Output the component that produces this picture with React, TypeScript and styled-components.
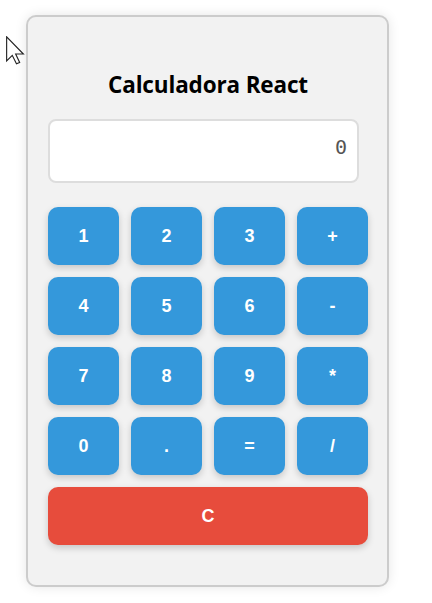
import React, { useState } from "react";
import styled, { createGlobalStyle } from "styled-components";

const Global = createGlobalStyle`
  html, body { margin: 0; padding: 0; background: #ffffff; }
  body { font-family: "Liberation Sans", Arial, sans-serif; }
  * { box-sizing: border-box; }
`;

const Page = styled.div`
  position: relative;
  display: flex;
  align-items: flex-start;
  padding: 15px 0 0 26px;
  min-height: 603px;
`;

const Card = styled.div`
  width: 363px;
  height: 572px;
  display: flex;
  flex-direction: column;
  padding: 20px 19px 40px 20px;
  background: #f2f2f2;
  border: 2px solid #cccccc;
  border-radius: 10px;
  box-shadow: 0 0 12px rgba(0, 0, 0, 0.1);
`;

const Title = styled.h2`
  margin: 33px 0 19px;
  height: 30px;
  line-height: 30px;
  text-align: center;
  font-family: "Open Sans", "Noto Sans", sans-serif;
  font-weight: 700;
  font-size: 22.5px;
  letter-spacing: -0.15px;
  color: #000000;
`;

const Display = styled.div`
  width: 311px;
  height: 64px;
  display: flex;
  align-items: flex-start;
  justify-content: flex-end;
  padding: 14px 10px 0;
  background: #ffffff;
  border: 2px solid #dddddd;
  border-radius: 8px;
  font-family: "DejaVu Sans Mono", "Liberation Mono", monospace;
  font-size: 20px;
  color: #555555;
`;

const Keys = styled.div`
  margin-top: 24px;
  width: 320px;
  display: grid;
  grid-template-columns: repeat(4, 71px);
  grid-auto-rows: 58px;
  column-gap: 12px;
  row-gap: 12px;
`;

const Key = styled.button<{ $danger?: boolean }>`
  grid-column: ${(p) => (p.$danger ? "1 / -1" : "auto")};
  border: none;
  border-radius: 10px;
  background: ${(p) => (p.$danger ? "#e74c3c" : "#3498db")};
  color: #ffffff;
  font-family: "Liberation Sans", Arial, sans-serif;
  font-weight: 700;
  font-size: 18px;
  box-shadow: 0 3px 7px rgba(0, 0, 0, 0.18);
  cursor: pointer;
  padding: 0;
`;

const Cursor = styled.svg`
  position: absolute;
  left: 5px;
  top: 36px;
`;

const keys = ["1", "2", "3", "+", "4", "5", "6", "-", "7", "8", "9", "*", "0", ".", "=", "/"];

export default function App() {
  const [value, setValue] = useState("0");
  const press = (k: string) => {
    if (k === "=") {
      try {
        // eslint-disable-next-line no-new-func
        setValue(String(Function(`return (${value})`)()));
      } catch {
        setValue("Error");
      }
      return;
    }
    setValue((v) => (v === "0" && /[0-9]/.test(k) ? k : v + k));
  };
  return (
    <Page>
      <Global />
      <Card>
        <Title>Calculadora React</Title>
        <Display>{value}</Display>
        <Keys>
          {keys.map((k) => (
            <Key key={k} onClick={() => press(k)}>
              {k}
            </Key>
          ))}
          <Key $danger onClick={() => setValue("0")}>
            C
          </Key>
        </Keys>
      </Card>
      <Cursor width="21" height="29" viewBox="0 0 12 18">
        <path
          d="M0.5 0.5 L0.5 15.5 L4 12 L6.6 17.3 L8.6 16.4 L6.1 11.2 L10.9 11.2 Z"
          fill="#ffffff"
          stroke="#222222"
          strokeWidth="0.7"
          strokeLinejoin="miter"
        />
      </Cursor>
    </Page>
  );
}
